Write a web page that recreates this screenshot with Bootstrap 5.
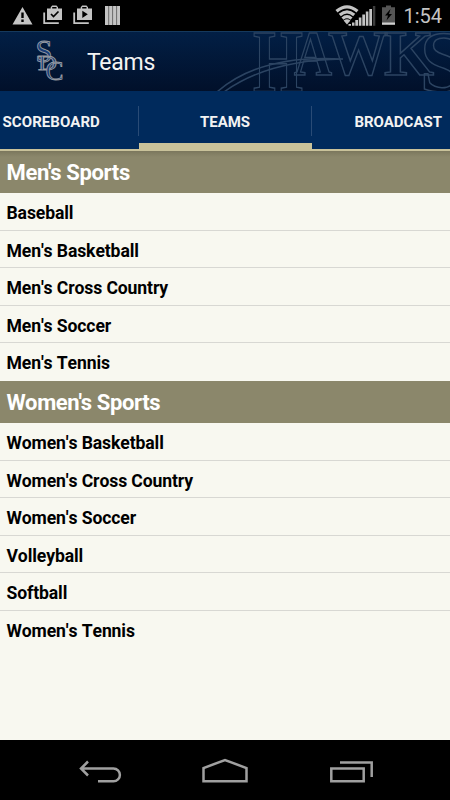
<!DOCTYPE html>
<html lang="en">
<head>
<meta charset="utf-8">
<meta name="viewport" content="width=device-width, initial-scale=1">
<title>Teams</title>
<link href="https://cdn.jsdelivr.net/npm/bootstrap@5.3.0/dist/css/bootstrap.min.css" rel="stylesheet">
<style>
body{font-family:Roboto,"Liberation Sans",sans-serif;background:#f8f8f0;color:#000;height:800px;overflow:hidden}
.status-bar{height:31px;background:#000;color:#c4c4c4}
.clock{font-size:20px;line-height:32px}
.app-bar{height:60px;background:linear-gradient(#021f45,#01102a);border-top:1px solid #15395c}
.app-title{font-size:23px;line-height:61px;color:#f3f3f3;letter-spacing:-.25px}
.tab-strip{height:60px;background:#002a5c}
.tab-strip .tab-item{font-size:15px;font-weight:700;color:#f3f3f3;line-height:62px;height:60px;white-space:nowrap;border-bottom:2px solid #c9c29a}
.tab-strip .tab-side{width:138.5px}
.tab-strip .tab-side span{margin-left:2.5px;letter-spacing:.08px}
.tab-strip .tab-mid{width:173px;border-bottom:8px solid #c9c29a}
.tab-rule{width:1px;height:30px;margin-top:15px;background:#294b76;margin-left:-1px}
.section-head{height:42.3px;line-height:43px;font-size:22px;letter-spacing:-.35px;font-weight:700;background:#8b876b;color:#fff;padding-left:6.5px}
.section-first{background:linear-gradient(#7b775d,#8b876b 6px)}
.team-list .list-group-item{height:37.5px;line-height:40.6px;font-size:17.6px;letter-spacing:-.12px;font-weight:700;font-kerning:none;background:#f8f8f0;color:#000;padding:0 0 0 6.5px;border:0;border-bottom:1px solid #d8d8d3}
.team-list .list-group-item:last-child{border-bottom:0}
.nav-keys{height:60px;background:#000}
</style>
<script src="https://cdn.jsdelivr.net/npm/bootstrap@5.3.0/dist/js/bootstrap.bundle.min.js"></script>
</head>
<body class="d-flex flex-column">
<div class="status-bar d-flex justify-content-between flex-shrink-0">
  <svg width="130" height="31" fill="#c4c4c4">
    <path fill-rule="evenodd" d="M22.500 7 32.500 24.500H12.500ZM21.300 12.500v5.500h2.400v-5.500ZM21.300 19.500v2.400h2.400v-2.400Z"/>
    <g id="bag"><path d="M43.300 12.500h1.800v9.700h13.700V24H43.300Z"/><path fill-rule="evenodd" d="M47 8.500h3.700V7.200l1.500-1.700h4.300L58 7.200v1.300h4V20H47Zm5.200 0h4.300V7.100h-4.300Z"/></g>
    <path d="m51 14 2.500 2.500 5-5" fill="none" stroke="#000" stroke-width="1.700"/>
    <use href="#bag" x="30"/><path d="m82.300 10.800 5.500 3.500-5.500 3.600Z" fill="#000"/>
    <path d="M105 6h15v19h-15Z"/><path d="M108.700 6v19M112.600 6v19M116.600 6v19" stroke="#6a6a6a" stroke-width="1"/>
  </svg>
  <div class="d-flex">
    <svg width="70" height="31">
      <g fill="none" stroke="#c4c4c4" stroke-width="3.200"><path d="M3.500 11.300Q14 2.500 24.500 11.300"/><path d="M6.800 15Q14 8.700 21.200 15"/><path d="M9.500 18.600Q14 14.700 18.500 18.600"/></g><path d="M10.600 20.500Q14 18 17.400 20.500L14 24.500Z" fill="#c4c4c4"/>
      <g fill="#c4c4c4"><path d="M15.500 24h2.500v1.800h-2.500ZM19 22.500h2.500v3.300H19ZM22.300 20h2.700v5.800h-2.700ZM25.800 17.500h2.600v8.300h-2.600ZM29.300 14.500H32v11.300h-2.700ZM32.800 11.500h2.600v14.300h-2.600ZM36.300 9H39v16.800h-2.700Z"/></g><path d="M39.900 6h2.400v19.800h-2.400Z" fill="#3d3d3d"/>
      <path d="M49 7.300h4V5.500h5v1.800h4V22H49Z" fill="#555"/><path d="M49 22.300h13v2.500H49Z" fill="#d0d0d0"/><path d="m57.500 9-5.500 6.500h3l-1.500 5 5.500-6.500h-3Z" fill="#000"/>
    </svg>
    <span class="clock pe-2" id="clock">1:54</span>
  </div>
</div>
<header class="app-bar position-relative d-flex flex-shrink-0 overflow-hidden">
  <svg class="position-absolute top-0 start-0" width="450" height="60" fill="none" stroke="#2c4462" stroke-width="1.500" font-family="Liberation Serif,serif" font-weight="bold">
    <text font-size="88" x="253" y="58.500" textLength="50" lengthAdjust="spacingAndGlyphs">H</text>
    <text font-size="64" x="294" y="43" textLength="38" lengthAdjust="spacingAndGlyphs">A</text>
    <text font-size="64" x="328" y="43" textLength="60" lengthAdjust="spacingAndGlyphs">W</text>
    <text font-size="64" x="384" y="42.500" textLength="50" lengthAdjust="spacingAndGlyphs">K</text>
    <text font-size="87" x="420" y="58.500" textLength="46" lengthAdjust="spacingAndGlyphs">S</text>
    <path d="M217 60Q260 22 343 27Q268 28 224 60"/>
  </svg>
  <svg class="position-relative" width="87" height="59" font-family="Liberation Serif,serif" fill="#173d78" stroke="#969aa0" stroke-width=".900">
    <text font-size="31" x="35.500" y="30" textLength="17" lengthAdjust="spacingAndGlyphs">S</text>
    <text font-size="22" x="38" y="38" textLength="19" lengthAdjust="spacingAndGlyphs">D</text>
    <text font-size="28" x="45.500" y="48" textLength="18" lengthAdjust="spacingAndGlyphs">C</text>
  </svg>
  <h1 class="app-title position-relative fw-normal mb-0">Teams</h1>
</header>
<nav class="tab-strip d-flex flex-shrink-0">
  <div class="tab-item tab-side"><span>SCOREBOARD</span></div>
  <div class="tab-rule"></div>
  <div class="tab-item tab-mid text-center">TEAMS</div>
  <div class="tab-rule"></div>
  <div class="tab-item tab-side text-end pe-2">BROADCAST</div>
</nav>
<main class="flex-grow-1">
  <h2 class="section-head section-first mb-0">Men's Sports</h2>
  <ul class="list-group list-group-flush team-list">
    <li class="list-group-item">Baseball</li><li class="list-group-item">Men's Basketball</li><li class="list-group-item">Men's Cross Country</li><li class="list-group-item">Men's Soccer</li><li class="list-group-item">Men's Tennis</li>
  </ul>
  <h2 class="section-head mb-0">Women's Sports</h2>
  <ul class="list-group list-group-flush team-list">
    <li class="list-group-item">Women's Basketball</li><li class="list-group-item">Women's Cross Country</li><li class="list-group-item">Women's Soccer</li><li class="list-group-item">Volleyball</li><li class="list-group-item">Softball</li><li class="list-group-item">Women's Tennis</li>
  </ul>
</main>
<footer class="nav-keys flex-shrink-0">
  <svg width="450" height="60" fill="none" stroke="#a0a0a0" stroke-width="2.500">
    <path d="m88 21.500-7 7 7 7M81 28.500h32.500a6.300 6.300 0 0 1 0 12.800H98"/>
    <path d="M203.500 41.300V28l21.500-8 21.500 8v13.300Z"/>
    <path d="M331.300 28.500h32.400v12.800h-32.400ZM340 22.500h31.700V37"/>
  </svg>
</footer>
</body>
</html>
